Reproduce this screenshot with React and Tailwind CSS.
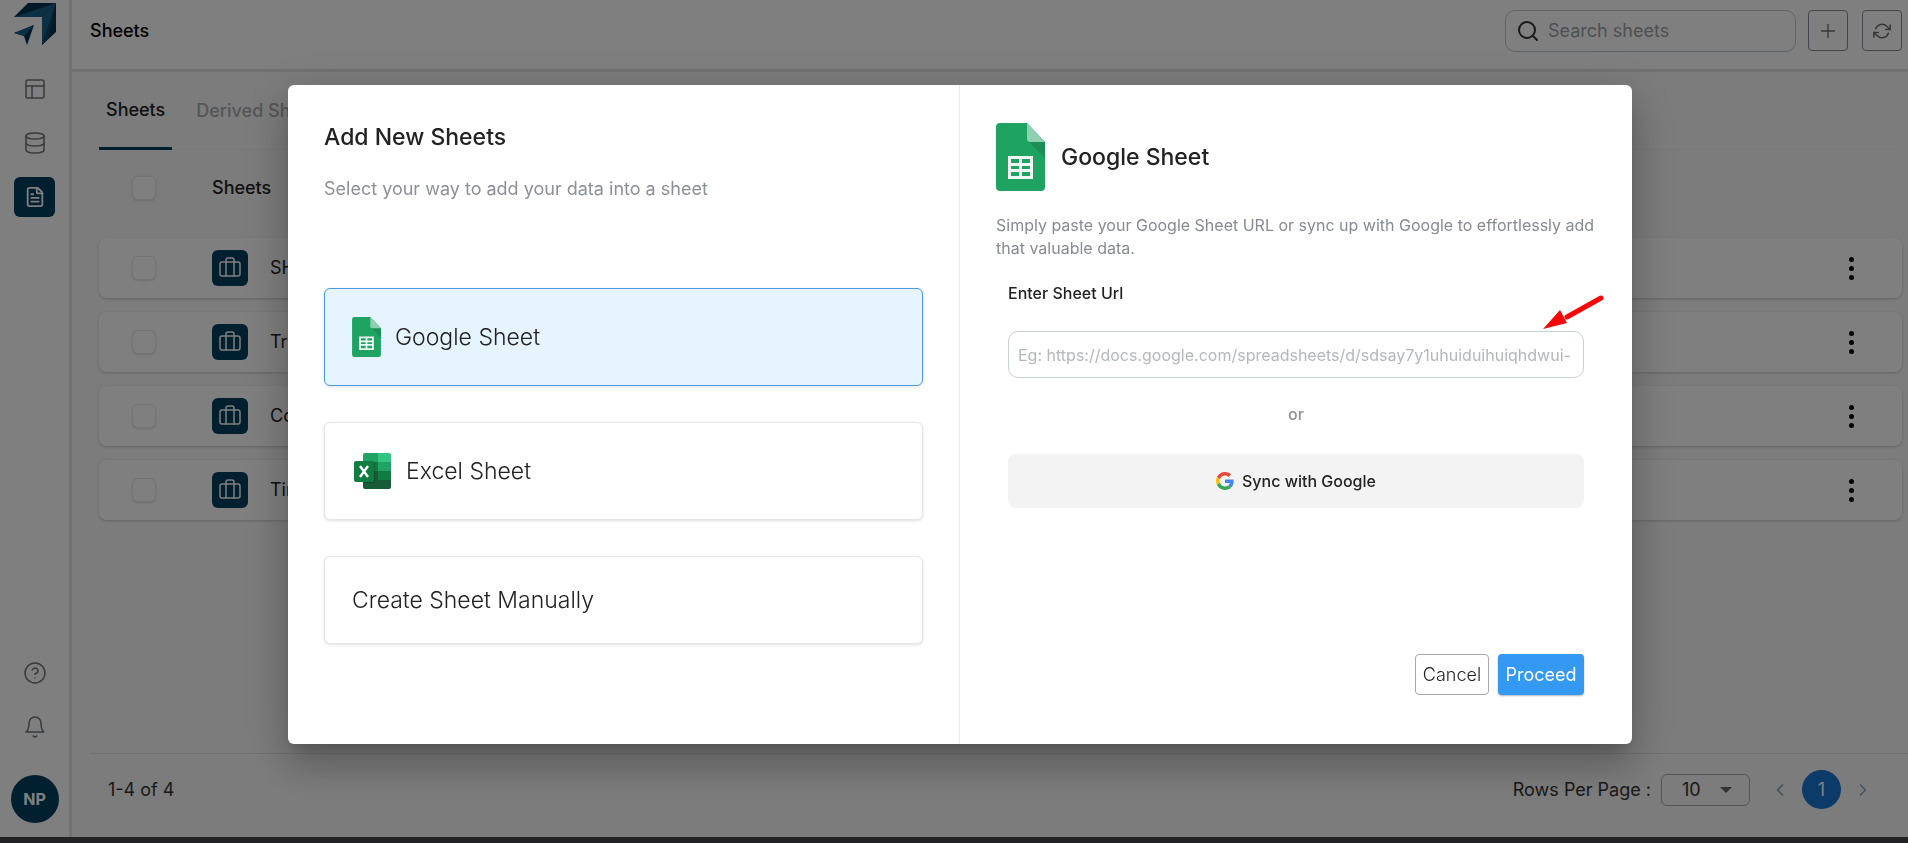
import React, { useState } from 'react';
import {
  Briefcase,
  ChevronLeft,
  ChevronRight,
  CircleQuestionMark,
  Database,
  FileText,
  PanelsTopLeft,
  Plus,
  Search,
} from 'lucide-react';
import { FiBell, FiRefreshCw } from 'react-icons/fi';

const rows = [
  { id: 1, name: 'SHEET 1' },
  { id: 2, name: 'Transactions' },
  { id: 3, name: 'Contacts' },
  { id: 4, name: 'Timesheet' },
];

const Logo = () => (
  <svg viewBox="0 0 42 42" className="w-[42px] h-[42px]">
    <path d="M0 14 14 0H42V29L28 42V14Z" fill="#003350" />
    <path d="M0 14 42 0 28 14Z" fill="#1b6089" />
    <path d="M42 0 28 14V42Z" fill="#1b6089" />
    <path d="M42 0 28 42 34 36Z" fill="#0f4868" />
    <path d="M0 30 20 22 13 42 10 33Z" fill="#003350" />
    <path d="M0 30 20 22 10 33Z" fill="#1b6089" />
  </svg>
);

const GoogleSheetIcon = ({ className }) => (
  <svg viewBox="0 0 49 68" className={className}>
    <path d="M4 0H31L49 19V64a4 4 0 0 1-4 4H4a4 4 0 0 1-4-4V4a4 4 0 0 1 4-4Z" fill="#1ea362" />
    <path d="M32 18 49 35V19Z" fill="#1a8f56" />
    <path d="M31 0 49 19H34a3 3 0 0 1-3-3Z" fill="#8ed1b1" />
    <path
      fillRule="evenodd"
      d="M12 33H37V56H12ZM15 36V40H23V36ZM26 36V40H34V36ZM15 43V46H23V43ZM26 43V46H34V43ZM15 49V53H23V49ZM26 49V53H34V49Z"
      fill="#f1f8f4"
    />
  </svg>
);

const ExcelIcon = () => (
  <svg viewBox="0 0 38 38" className="w-[38px] h-[38px]">
    <path d="M11 1H24V10H9V3a2 2 0 0 1 2-2Z" fill="#21a366" />
    <path d="M24 1H35a2 2 0 0 1 2 2V10H24Z" fill="#33c481" />
    <path d="M9 10H24V19H9Z" fill="#107c41" />
    <path d="M24 10H37V19H24Z" fill="#21a366" />
    <path d="M9 19H37V35a2 2 0 0 1-2 2H11a2 2 0 0 1-2-2Z" fill="#185c37" />
    <path d="M24 19H37V28H24Z" fill="#107c41" />
    <path d="M9 9H19a2 2 0 0 1 2 2V29a2 2 0 0 1-2 2H9Z" fill="#000" opacity=".2" />
    <rect x="0" y="9" width="20" height="21" rx="2" fill="#107c41" />
    <path d="M6 14 14 25M14 14 6 25" stroke="#fff" strokeWidth="2.4" fill="none" />
  </svg>
);

const GoogleIcon = () => (
  <svg viewBox="0 0 48 48" className="w-[18px] h-[18px]">
    <path fill="#EA4335" d="M24 9.5c3.54 0 6.71 1.22 9.21 3.6l6.85-6.85C35.9 2.38 30.47 0 24 0 14.62 0 6.51 5.38 2.56 13.22l7.98 6.19C12.43 13.72 17.74 9.5 24 9.5z" />
    <path fill="#4285F4" d="M46.98 24.55c0-1.57-.15-3.09-.38-4.55H24v9.02h12.94c-.58 2.96-2.26 5.48-4.78 7.18l7.73 6c4.51-4.18 7.09-10.36 7.09-17.65z" />
    <path fill="#FBBC05" d="M10.53 28.59c-.48-1.45-.76-2.99-.76-4.59s.27-3.14.76-4.59l-7.98-6.19C.92 16.46 0 20.12 0 24c0 3.88.92 7.54 2.56 10.78l7.97-6.19z" />
    <path fill="#34A853" d="M24 48c6.48 0 11.93-2.13 15.89-5.81l-7.73-6c-2.15 1.45-4.92 2.3-8.16 2.3-6.26 0-11.57-4.22-13.47-9.91l-7.98 6.19C6.51 42.62 14.62 48 24 48z" />
  </svg>
);

const Checkbox = ({ label }) => (
  <input
    type="checkbox"
    aria-label={label}
    className="block appearance-none w-6 h-6 rounded-md border border-gray-200 bg-white shadow-sm"
  />
);

const Sidebar = () => (
  <aside className="w-[72px] shrink-0 border-r-3 border-[#dfe3e6] bg-white flex flex-col items-center pt-[3px] pb-3.5 text-[#70757b]">
    <Logo />
    <nav className="mt-6 flex flex-col items-center gap-3.5">
      <button aria-label="Dashboards" className="w-10 h-10 flex items-center justify-center">
        <PanelsTopLeft size={24} strokeWidth={1.5} />
      </button>
      <button aria-label="Data" className="w-10 h-10 flex items-center justify-center">
        <Database size={24} strokeWidth={1.5} />
      </button>
      <button aria-label="Sheets" className="w-[41px] h-10 rounded-md bg-[#003f5f] text-white flex items-center justify-center">
        <FileText size={22} strokeWidth={2} />
      </button>
    </nav>
    <div className="mt-auto flex flex-col items-center gap-[30px]">
      <button aria-label="Help">
        <CircleQuestionMark size={24} strokeWidth={1.5} />
      </button>
      <button aria-label="Notifications">
        <FiBell size={24} strokeWidth={1.5} />
      </button>
      <button className="mt-1.5 w-12 h-12 rounded-full bg-[#003f5f] text-white text-base font-bold">NP</button>
    </div>
  </aside>
);

const Header = () => (
  <header className="h-[72px] shrink-0 border-b-3 border-[#dfe3e6] bg-white pl-[18px] pr-1.5 pb-2 flex items-center">
    <h1 className="text-lg font-medium text-black">Sheets</h1>
    <div className="ml-auto flex items-center">
      <label className="w-[291px] h-[42px] rounded-[10px] border border-[#c3c9cf] flex items-center gap-2 pl-2.5 pr-2">
        <Search size={24} strokeWidth={2} className="text-[#333]" />
        <input
          type="text"
          placeholder="Search sheets"
          className="min-w-0 flex-1 outline-none text-lg placeholder:text-[#9aa1a9]"
        />
      </label>
      <button aria-label="Add sheet" className="ml-3 w-10 h-[41px] rounded-sm border border-[#868b92] text-[#6b6f75] flex items-center justify-center">
        <Plus size={22} strokeWidth={1.5} />
      </button>
      <button aria-label="Refresh" className="ml-3.5 w-10 h-[41px] rounded-sm border border-[#868b92] text-[#6b6f75] flex items-center justify-center">
        <FiRefreshCw size={18} strokeWidth={2} />
      </button>
    </div>
  </header>
);

const SheetsTable = () => (
  <table className="w-full border-separate border-spacing-x-0 border-spacing-y-[14px]">
    <thead>
      <tr>
        <th className="w-[113px] h-[60px] pl-[33px] pb-3">
          <Checkbox label="Select all" />
        </th>
        <th className="pb-3 text-left text-lg font-medium text-[#222]">Sheets</th>
        <th className="w-[78px]"></th>
      </tr>
    </thead>
    <tbody>
      {rows.map((row) => (
        <tr key={row.id} className="rounded-lg shadow-[0_1px_3px_rgba(0,0,0,0.2)]">
          <td className="h-[60px] pl-[33px] bg-white rounded-l-lg">
            <Checkbox label={`Select ${row.name}`} />
          </td>
          <td className="bg-white">
            <div className="flex items-center gap-[22px]">
              <span className="w-9 h-9 rounded-md bg-[#003f5f] text-white flex items-center justify-center">
                <Briefcase size={24} strokeWidth={1.5} />
              </span>
              <span className="text-lg text-[#222]">{row.name}</span>
            </div>
          </td>
          <td className="bg-white rounded-r-lg">
            <button aria-label="More options" className="flex flex-col items-center gap-1 w-6 ml-[15px]">
              <span className="w-[5px] h-[5px] rounded-full bg-black" />
              <span className="w-[5px] h-[5px] rounded-full bg-black" />
              <span className="w-[5px] h-[5px] rounded-full bg-black" />
            </button>
          </td>
        </tr>
      ))}
    </tbody>
  </table>
);

const Pagination = () => (
  <footer className="ml-[18px] h-[84px] border-t border-[#dfe3e6] pl-[18px] pr-[35px] pb-3 flex items-center text-lg text-[#333]">
    <span>1-4 of 4</span>
    <label htmlFor="rowsPerPage" className="ml-auto">Rows Per Page :</label>
    <div className="relative ml-2.5">
      <select
        id="rowsPerPage"
        defaultValue="10"
        className="appearance-none w-[89px] h-8 rounded-md border border-[#a5a9ad] pl-5 text-lg leading-7"
      >
        <option>10</option>
        <option>25</option>
        <option>50</option>
      </select>
      <span className="pointer-events-none absolute right-[18px] top-[13px] border-x-[6px] border-x-transparent border-t-[6px] border-t-[#666]" />
    </div>
    <button aria-label="Previous page" className="ml-5 text-[#8fa6bb]">
      <ChevronLeft size={20} />
    </button>
    <button className="mx-3 w-[39px] h-[39px] rounded-full bg-[#1976d2] text-white">1</button>
    <button aria-label="Next page" className="text-[#8fa6bb]">
      <ChevronRight size={20} />
    </button>
  </footer>
);

const AddSheetModal = () => {
  const [selected, setSelected] = useState('google');

  const cardClass = (type) =>
    `w-full rounded-md border px-[27px] flex items-center text-[23px] font-light text-[#222] shadow-[0_1px_3px_rgba(0,0,0,0.12)] ${
      selected === type ? 'border-[#4a9be0] bg-[#e5f4fe]' : 'border-[#e6e6e6] bg-white'
    }`;

  return (
    <div className="fixed inset-x-0 top-0 bottom-[6px] bg-black/50 flex items-start justify-center pt-[85px] pl-3">
      <div
        role="dialog"
        aria-modal="true"
        className="relative w-[1344px] max-w-full min-h-[659px] rounded-md bg-white grid grid-cols-2 shadow-[0_11px_15px_-7px_rgba(0,0,0,0.2),0_24px_38px_3px_rgba(0,0,0,0.14),0_9px_46px_8px_rgba(0,0,0,0.12)]"
      >
        <section className="border-r border-[#e8eaec] px-9 pt-9">
          <h2 className="text-[23px] leading-8 font-medium text-[#222]">Add New Sheets</h2>
          <p className="mt-[22px] text-lg leading-7 text-[#8b9096]">Select your way to add your data into a sheet</p>
          <div className="mt-[85px] flex flex-col gap-9">
            <button className={`h-[98px] ${cardClass('google')}`} onClick={() => setSelected('google')}>
              <GoogleSheetIcon className="w-[29px] h-10 mr-3.5" />
              Google Sheet
            </button>
            <button className={`h-[98px] ${cardClass('excel')}`} onClick={() => setSelected('excel')}>
              <span className="ml-0.5 mr-3.5">
                <ExcelIcon />
              </span>
              Excel Sheet
            </button>
            <button className={`h-[88px] ${cardClass('manual')}`} onClick={() => setSelected('manual')}>
              Create Sheet Manually
            </button>
          </div>
        </section>

        <section className="px-9 pt-[38px] pb-[49px] flex flex-col">
          <div className="flex items-center gap-4 h-[68px]">
            <GoogleSheetIcon className="w-[49px] h-[68px]" />
            <h3 className="text-[23px] font-medium text-[#222]">Google Sheet</h3>
          </div>
          <p className="mt-[23px] text-base leading-[23px] text-[#868b91]">
            Simply paste your Google Sheet URL or sync up with Google to effortlessly add that valuable data.
          </p>
          <div className="px-3 flex flex-col flex-1">
            <label htmlFor="sheetUrl" className="mt-[21px] text-base leading-6 font-medium text-[#222]">
              Enter Sheet Url
            </label>
            <input
              id="sheetUrl"
              type="text"
              placeholder="Eg: https://docs.google.com/spreadsheets/d/sdsay7y1uhuiduihuiqhdwui-"
              className="mt-[26px] h-[47px] rounded-[10px] border border-[#c8d0d4] px-[9px] text-base outline-none placeholder:text-[#b3b8bd]"
            />
            <p className="mt-6 text-center text-base leading-6 font-medium text-[#8b9096]">or</p>
            <button className="mt-7 h-[54px] rounded-lg bg-[#f3f3f3] flex items-center justify-center gap-2 text-base font-medium text-[#222]">
              <GoogleIcon />
              Sync with Google
            </button>
            <div className="mt-auto flex justify-end gap-[9px] text-lg">
              <button className="w-[74px] h-[41px] rounded-sm border border-[#a5a9ae] font-light text-[#222]">Cancel</button>
              <button className="w-[86px] h-[41px] rounded-sm bg-[#3399f3] text-white shadow-[0_1px_2px_rgba(0,0,0,0.3)]">
                Proceed
              </button>
            </div>
          </div>
        </section>

        <svg viewBox="0 0 64 38" className="absolute right-[25px] top-[208px] w-16 h-[38px]">
          <path d="M58 5 24 24" stroke="#f60808" strokeWidth="5" strokeLinecap="round" />
          <path d="M0 36 17 17 24 30Z" fill="#f60808" />
        </svg>
      </div>
    </div>
  );
};

const App = () => {
  return (
    <div className="h-screen flex flex-col bg-white font-['Inter',sans-serif]">
      <div className="flex-1 min-h-0 flex">
        <Sidebar />
        <div className="flex-1 min-w-0 flex flex-col bg-[#f8f8f8]">
          <Header />
          <main className="flex-1 min-h-0 pl-[27px] pr-1.5">
            <div className="mr-2 h-[78px] border-b border-[#f0f1f2] flex items-stretch text-lg font-medium">
              <button className="h-[78px] px-[7px] border-b-3 border-[#003f5f] text-[#222]">Sheets</button>
              <button className="h-[78px] px-6 text-[#a8acb1]">Derived Sheets</button>
            </div>
            <SheetsTable />
          </main>
          <Pagination />
        </div>
      </div>
      <div className="h-[6px] shrink-0 bg-[#222224]" />
      <AddSheetModal />
    </div>
  );
};

export default App;
